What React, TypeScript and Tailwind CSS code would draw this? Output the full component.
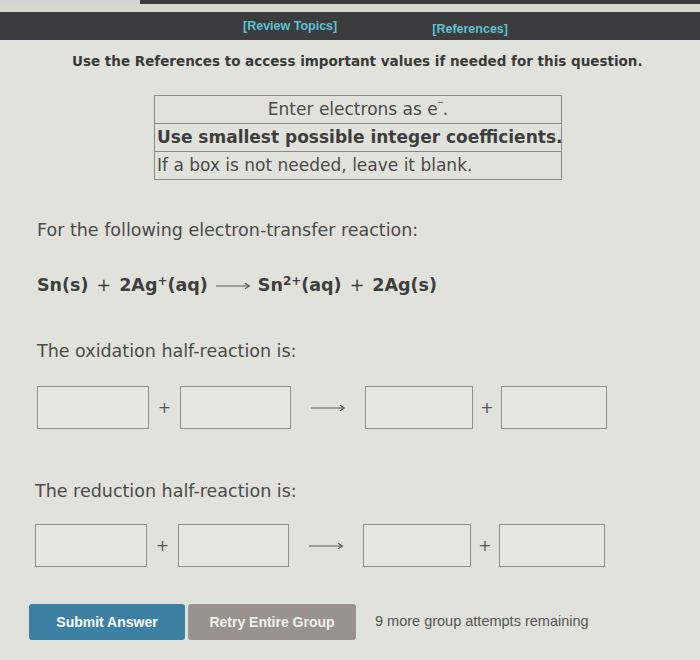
import React from "react";

const verdana = { fontFamily: '"DejaVu Sans", Verdana, sans-serif' };

function Arrow() {
  return (
    <svg width="36" height="10" viewBox="0 0 36 10" className="text-[#555]">
      <line x1="1" y1="5" x2="34" y2="5" stroke="currentColor" strokeWidth="1.1" />
      <path d="M30 2.2 L34.5 5 L30 7.8" fill="none" stroke="currentColor" strokeWidth="1.1" />
    </svg>
  );
}

function HalfRow() {
  return (
    <div className="flex items-center">
      <div className="w-[112px] h-[43px] border border-[#8f8f8c] bg-[#e7e7e2]" />
      <div className="w-[31px] text-center text-[16px] text-[#555]" style={verdana}>+</div>
      <div className="w-[111px] h-[43px] border border-[#8f8f8c] bg-[#e7e7e2]" />
      <div className="w-[74px] flex justify-center"><Arrow /></div>
      <div className="w-[108px] h-[43px] border border-[#8f8f8c] bg-[#e7e7e2]" />
      <div className="w-[28px] text-center text-[16px] text-[#555]" style={verdana}>+</div>
      <div className="w-[106px] h-[43px] border border-[#8f8f8c] bg-[#e7e7e2]" />
    </div>
  );
}

export default function App() {
  return (
    <div className="w-[700px] h-[660px] bg-[#e2e2dc] overflow-hidden text-[#444]">
      <div className="flex h-[4px]">
        <div className="w-[140px] bg-[#d6d6d0]" />
        <div className="flex-1 bg-[#3a3a3c]" />
      </div>
      <div className="h-[8px] bg-[#d8d8d2]" />
      <div
        className="h-[28px] bg-[#3c3c3e] flex items-center pl-[243px] gap-[95px] text-[12.5px] font-bold text-[#5ec2d2]"
        style={{ fontFamily: '"Liberation Sans", Arial, sans-serif' }}
      >
        <span>[Review Topics]</span>
        <span className="mt-[6px]">[References]</span>
      </div>
      <div className="pl-[72px] pt-[12px] leading-[18px] text-[13.5px] font-bold text-[#3a3a3a]" style={verdana}>
        Use the References to access important values if needed for this question.
      </div>

      <div className="ml-[154px] mt-[25px] w-[408px] border border-[#8a8a88] text-[17px] text-[#4a4a4a]" style={verdana}>
        <div className="h-[28px] flex items-center justify-center border-b border-[#8a8a88]">
          <span>
            Enter electrons as e<sup className="text-[10px]">‾</sup>.
          </span>
        </div>
        <div className="h-[28px] flex items-center pl-[2px] font-bold border-b border-[#8a8a88] text-[#3e3e3e] whitespace-nowrap">
          Use smallest possible integer coefficients.
        </div>
        <div className="h-[27px] flex items-center pl-[2px]">If a box is not needed, leave it blank.</div>
      </div>

      <div className="pl-[37px] mt-[38px] leading-[24px] text-[17.5px] text-[#4a4a4a]" style={verdana}>
        For the following electron-transfer reaction:
      </div>

      <div className="pl-[37px] mt-[31px] h-[24px] flex items-center text-[17.5px] text-[#3e3e3e] whitespace-nowrap" style={verdana}>
        <span className="font-bold">Sn(s)</span>
        <span className="mx-[8px] font-normal">+</span>
        <span className="font-bold">
          2Ag<sup className="text-[12px]">+</sup>(aq)
        </span>
        <span className="mx-[7px] mt-[2px]"><Arrow /></span>
        <span className="font-bold">
          Sn<sup className="text-[12px]">2+</sup>(aq)
        </span>
        <span className="mx-[8px] font-normal">+</span>
        <span className="font-bold">2Ag(s)</span>
      </div>

      <div className="pl-[37px] mt-[42px] leading-[24px] text-[17.5px] text-[#4a4a4a]" style={verdana}>
        The oxidation half-reaction is:
      </div>

      <div className="pl-[37px] mt-[23px]">
        <HalfRow />
      </div>

      <div className="pl-[35px] mt-[50px] leading-[24px] text-[17.5px] text-[#4a4a4a]" style={verdana}>
        The reduction half-reaction is:
      </div>

      <div className="pl-[35px] mt-[21px]">
        <HalfRow />
      </div>

      <div
        className="pl-[29px] mt-[37px] flex items-center text-[14px]"
        style={{ fontFamily: '"Liberation Sans", Arial, sans-serif' }}
      >
        <button className="w-[156px] h-[36px] rounded-[3px] bg-[#3c80a4] text-white font-bold">Submit Answer</button>
        <button className="ml-[3px] w-[168px] h-[36px] rounded-[3px] bg-[#9a928f] text-[#f0f0f0] font-bold">Retry Entire Group</button>
        <span className="ml-[19px] text-[14.5px] text-[#555]">9 more group attempts remaining</span>
      </div>
    </div>
  );
}
